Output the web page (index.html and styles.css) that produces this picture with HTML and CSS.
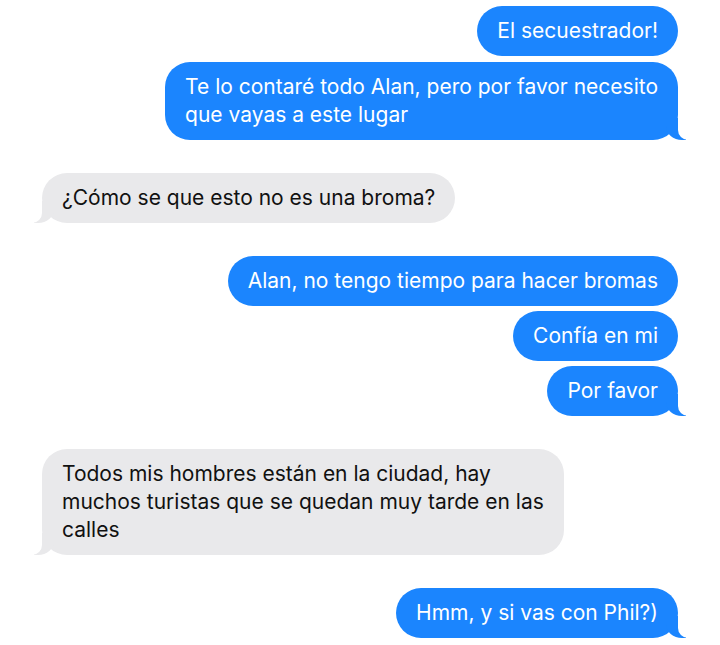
FILE: index.html
```html
<!doctype html>
<html lang="es">

<head>
    <meta charset="UTF-8">
    <meta name="viewport" content="width=device-width, initial-scale=1.0">
    <title>Chat</title>
    <link rel="stylesheet" href="styles.css">
</head>

<body>
    <div class="chat">
        <div class="group first">
            <p class="bubble sent">El secuestrador!</p>
            <p class="bubble sent tail">Te lo contaré todo Alan, pero por favor necesito<br>que vayas a este lugar</p>
        </div>
        <div class="group">
            <p class="bubble received tail">¿Cómo se que esto no es una broma?</p>
        </div>
        <div class="group">
            <p class="bubble sent">Alan, no tengo tiempo para hacer bromas</p>
            <p class="bubble sent">Confía en mi</p>
            <p class="bubble sent tail">Por favor</p>
        </div>
        <div class="group">
            <p class="bubble received tail">Todos mis hombres están en la ciudad, hay<br>muchos turistas que se quedan muy tarde en las<br>calles</p>
        </div>
        <div class="group">
            <p class="bubble sent tail">Hmm, y si vas con Phil?)</p>
        </div>
    </div>
</body>

</html>
```

FILE: styles.css
```css
* {
    margin: 0;
    padding: 0;
    box-sizing: border-box;
}

body {
    background-color: #ffffff;
    font-family: Inter, 'Liberation Sans', Arial, sans-serif;
}

.chat {
    display: flex;
    flex-direction: column;
    gap: 33px;
    padding: 6px 42px 0;
}

.group {
    display: flex;
    flex-direction: column;
    gap: 5px;
}

.group.first {
    gap: 6px;
}

.bubble {
    position: relative;
    max-width: 560px;
    padding: 11px 20px;
    border-radius: 25px;
    font-size: 21px;
    line-height: 28px;
}

.sent {
    align-self: flex-end;
    color: #ffffff;
    background-color: #1b85fe;
}

.received {
    align-self: flex-start;
    color: #111111;
    background-color: #e9e9eb;
}

/* tails */
.tail::before,
.tail::after {
    content: "";
    position: absolute;
    bottom: 0;
    height: 22px;
}

.sent.tail::before {
    right: -8px;
    width: 20px;
    background-color: #1b85fe;
    border-bottom-left-radius: 16px 14px;
}

.sent.tail::after {
    right: -10px;
    width: 10px;
    background-color: #ffffff;
    border-bottom-left-radius: 10px;
}

.received.tail::before {
    left: -8px;
    width: 20px;
    background-color: #e9e9eb;
    border-bottom-right-radius: 16px 14px;
}

.received.tail::after {
    left: -10px;
    width: 10px;
    background-color: #ffffff;
    border-bottom-right-radius: 10px;
}
```
